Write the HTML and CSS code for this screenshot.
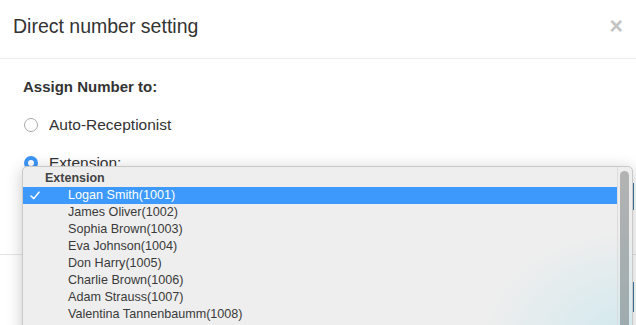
FILE: index.html
```html
<!DOCTYPE html>
<html>
<head>
<meta charset="utf-8">
<link rel="stylesheet" href="styles.css">
</head>
<body>
<div class="modal">
  <div class="modal-header">
    <h4 class="title">Direct number setting</h4>
    <span class="close">×</span>
  </div>
  <div class="modal-body">
    <div class="section-label">Assign Number to:</div>
    <label class="radio-row"><span class="radio"></span><span class="radio-text">Auto-Receptionist</span></label>
    <label class="radio-row"><span class="radio checked"></span><span class="radio-text">Extension:</span></label>
    <div class="select-row"><div class="select-box"></div></div>
  </div>
  <div class="modal-footer"><div class="btn"></div></div>

  <div class="dropdown">
    <div class="list">
      <div class="group">Extension</div>
      <div class="item selected"><svg class="check" width="10" height="9" viewBox="0 0 10 9"><path d="M1 5 L3.8 7.6 L9 1.2" fill="none" stroke="#fff" stroke-width="1.5" stroke-linecap="round" stroke-linejoin="round"/></svg>Logan Smith(1001)</div>
      <div class="item">James Oliver(1002)</div>
      <div class="item">Sophia Brown(1003)</div>
      <div class="item">Eva Johnson(1004)</div>
      <div class="item">Don Harry(1005)</div>
      <div class="item">Charlie Brown(1006)</div>
      <div class="item">Adam Strauss(1007)</div>
      <div class="item">Valentina Tannenbaumm(1008)</div>
    </div>
    <div class="scroll"><div class="thumb"></div></div>
  </div>
</div>
</body>
</html>
```

FILE: styles.css
```css
html, body {
  margin: 0;
  padding: 0;
  background: #fff;
  overflow: hidden;
}
body {
  font-family: "Liberation Sans", Arial, sans-serif;
  color: #333;
  width: 636px;
  height: 325px;
}
.modal {
  position: relative;
  width: 636px;
  height: 325px;
}
.modal-header {
  box-sizing: border-box;
  height: 59px;
  border-bottom: 1px solid #ececec;
  display: flex;
  justify-content: space-between;
  align-items: flex-start;
  padding: 14px 13px 0 13px;
}
.title {
  margin: 0;
  font-size: 19.5px;
  font-weight: normal;
  line-height: 24px;
  color: #333;
}
.close {
  font-size: 23px;
  font-weight: bold;
  line-height: 24px;
  color: #c4c4c4;
}
.modal-body {
  padding: 18px 0 0 23px;
}
.section-label {
  font-weight: bold;
  font-size: 15px;
  line-height: 20px;
  color: #333;
}
.radio-row {
  display: flex;
  align-items: center;
  height: 20px;
  margin-top: 18px;
  font-size: 15.5px;
}
.radio {
  box-sizing: border-box;
  width: 14px;
  height: 14px;
  border-radius: 50%;
  border: 1px solid #aaa;
  background: #fff;
  margin: 0 11px 0 1px;
}
.radio.checked {
  border: 4px solid #3b95f6;
  background: #fff;
}
.radio-text {
  color: #333;
}
.select-row {
  margin-top: 10px;
  height: 37px;
}
.select-box {
  margin-left: 26px;
  margin-right: 2px;
  height: 27px;
  margin-top: 7px;
  border-right: 1px solid #3f7aa0;
}
.modal-footer {
  box-sizing: border-box;
  margin-top: 34px;
  border-top: 1px solid #e5e5e5;
  padding: 27px 2px 0 0;
  display: flex;
  justify-content: flex-end;
}
.btn {
  width: 1px;
  height: 30px;
  background: #3f7aa0;
}
.dropdown {
  position: absolute;
  left: 22px;
  top: 166px;
  width: 611px;
  height: 175px;
  box-sizing: border-box;
  border: 1px solid #c9c9c9;
  border-radius: 5px;
  background:
    radial-gradient(ellipse 150px 110px at 100% 100%, rgba(205, 232, 238, 0.9), rgba(238, 238, 238, 0) 100%),
    #eeeeee;
  box-shadow: 0 3px 16px rgba(0, 0, 0, 0.22);
  display: flex;
  overflow: hidden;
}
.list {
  flex: 1;
  padding-top: 3px;
  font-size: 12.6px;
  color: #3a3a3a;
}
.group {
  height: 17px;
  line-height: 17px;
  font-weight: bold;
  font-size: 12.5px;
  padding-left: 22px;
  color: #444;
}
.item {
  position: relative;
  height: 17px;
  line-height: 17px;
  padding-left: 45px;
  white-space: nowrap;
}
.item.selected {
  background: #3d99fc;
  color: #fff;
}
.check {
  position: absolute;
  left: 7px;
  top: 4px;
}
.scroll {
  width: 14px;
  border-left: 1px solid #dcdcdc;
  padding-top: 4px;
}
.thumb {
  width: 9px;
  margin-left: 2px;
  height: 200px;
  border-radius: 5px;
  background: linear-gradient(#b3b3b3, #98a9ad);
}
```
